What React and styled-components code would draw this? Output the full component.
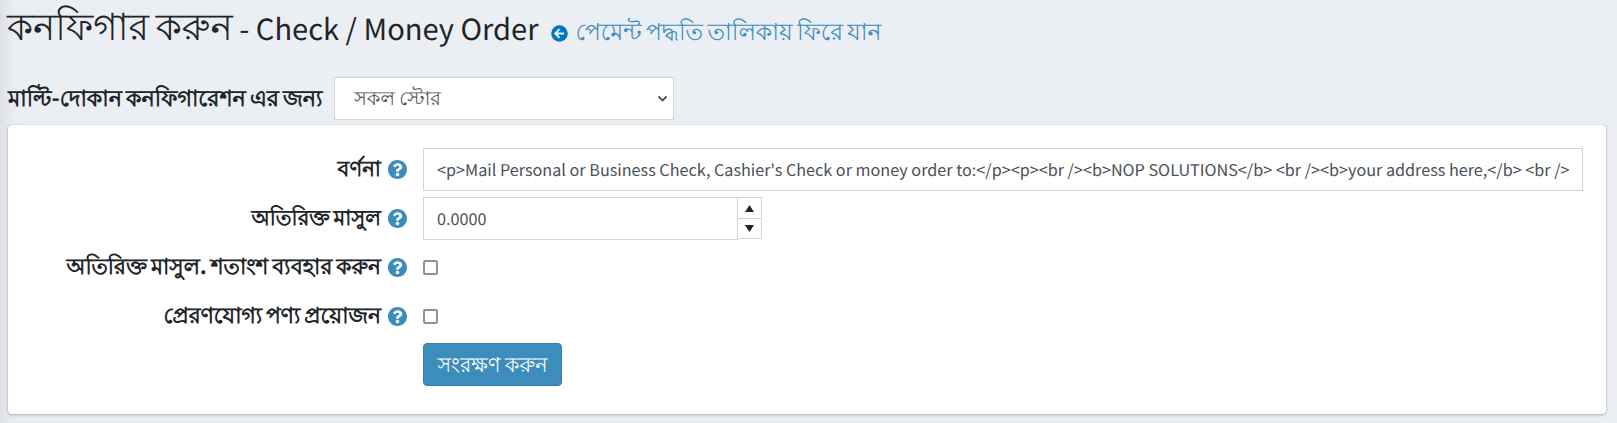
import React from "react";
import styled, { createGlobalStyle } from "styled-components";

const GlobalStyle = createGlobalStyle`
  * { box-sizing: border-box; }
  body {
    margin: 0;
    background: #ebeef3;
    color: #212529;
    font-family: "Noto Sans CJK JP", "Noto Sans", sans-serif;
    text-rendering: geometricPrecision;
  }
`;

const Page = styled.main`
  height: 423px;
  padding: 0 11px 0 7px;
  background: linear-gradient(to right, #dde0e5 0, #e6e9ee 8px, #ebeef3 22px);
`;

const Header = styled.header`
  display: flex;
  align-items: baseline;
  height: 77px;
  white-space: nowrap;
`;

const Title = styled.h1`
  margin: 0;
  font-weight: 400;
  font-size: 29.1px;
  line-height: 56px;
`;

const TitleLocal = styled.span`
  font-family: "Noto Sans", sans-serif;
  font-size: 37.3px;
  line-height: 40px;
  word-spacing: -3px;
`;

const BackLink = styled.a`
  display: flex;
  align-items: baseline;
  margin-left: 13px;
  color: #3c8dbc;
  font-size: 23.4px;
  line-height: 40px;
  word-spacing: -1px;
  svg { margin-right: 7px; transform: translateY(2px); }
`;

const StoreScope = styled.div`
  display: flex;
  align-items: center;
  height: 43px;
`;

const Label = styled.label`
  font-weight: 700;
  font-size: ${(p) => p.$size || 21.6}px;
  line-height: 32px;
  padding-bottom: 3px;
  word-spacing: -1px;
  white-space: nowrap;
`;

const StoreLabel = styled(Label)`
  width: 327px;
  padding-left: 1px;
`;

const Control = styled.div`
  display: flex;
  align-items: center;
  width: ${(p) => p.$width};
  height: 43px;
  padding: 0 13px 1px;
  border: 1px solid #ced4da;
  background: #fff;
  color: #495057;
  font-size: 16.2px;
  line-height: 24px;
  white-space: nowrap;
`;

const Select = styled(Control)`
  justify-content: space-between;
  padding: 0 5px 3px 19px;
  font-size: 19.4px;
  svg { transform: translateY(2px); }
`;

const Value = styled.span`
  flex: 1;
  overflow: hidden;
`;

const Card = styled.section`
  margin: 5px 0 0 1px;
  height: 289px;
  padding: 23px 23px 0 0;
  border-radius: 4px;
  background: #fff;
  box-shadow: 0 0 1px rgba(0, 0, 0, 0.25), 0 1px 3px rgba(0, 0, 0, 0.25);
`;

const Row = styled.div`
  display: grid;
  grid-template-columns: 399px minmax(0, 1fr);
  column-gap: 16px;
  align-items: center;
  height: 43px;
  margin-bottom: ${(p) => p.$gap || 6}px;
`;

const LabelCell = styled.div`
  display: flex;
  align-items: center;
  justify-content: flex-end;
  gap: 7px;
`;

const NumberField = styled.div`
  display: flex;
`;

const Spinner = styled.div`
  display: grid;
  grid-template-rows: 22px 20px;
  width: 25px;
  height: 42px;
  margin-left: -1px;
`;

const SpinButton = styled.button`
  display: grid;
  place-items: center;
  padding: 0;
  margin-top: ${(p) => (p.$lower ? "-1px" : "0")};
  border: 1px solid #ced4da;
  background: #fff;
`;

const Checkbox = styled.input`
  appearance: none;
  display: block;
  width: 15px;
  height: 15px;
  margin: 0;
  border: 2px solid #8f8f9d;
  border-radius: 2px;
  background: #fff;
`;

const SaveButton = styled.button`
  grid-column: 2;
  justify-self: start;
  display: flex;
  align-items: center;
  justify-content: center;
  width: 139px;
  height: 43px;
  padding: 0 0 4px;
  border: 1px solid #367fa9;
  border-radius: 4px;
  background: #3c8dbc;
  color: #fff;
  font: 400 20.6px/24px "Noto Sans CJK JP", "Noto Sans", sans-serif;
  text-rendering: inherit;
  white-space: nowrap;
`;

const HelpIcon = () => (
  <svg width="19" height="19" viewBox="8 8 496 496">
    <path fill="#3c8dbc" d="M504 256c0 137-111 248-248 248S8 393 8 256C8 119.100 119 8 256 8s248 111.100 248 248zM262.700 90c-54.500 0-89.300 23-116.500 63.800-3.500 5.300-2.400 12.400 2.700 16.300l34.700 26.300c5.200 3.900 12.600 3 16.700-2.100 17.900-22.700 30.100-35.800 57.300-35.800 20.400 0 45.700 13.100 45.700 33 0 15-12.400 22.700-32.500 34C247.100 238.500 216 254.900 216 296v4c0 6.600 5.400 12 12 12h56c6.600 0 12-5.400 12-12v-1.300c0-28.500 83.200-29.600 83.200-106.700 0-58-60.200-102-116.500-102zM256 338c-25.400 0-46 20.600-46 46s20.600 46 46 46 46-20.600 46-46-20.600-46-46-46z" />
  </svg>
);

const BackIcon = () => (
  <svg width="17" height="17" viewBox="0 0 17 17">
    <circle cx="8.500" cy="8.500" r="8.300" fill="#0077c2" />
    <path d="M13 8.500H4.500M8.500 4.200L4.200 8.500l4.300 4.300" fill="none" stroke="#ebeef3" strokeWidth="1.900" />
  </svg>
);

const Field = ({ label, size, gap, children }) => (
  <Row $gap={gap}>
    <LabelCell>
      <Label $size={size}>{label}</Label>
      <HelpIcon />
    </LabelCell>
    {children}
  </Row>
);

const description =
  "<p>Mail Personal or Business Check, Cashier's Check or money order to:</p><p><br /><b>NOP SOLUTIONS</b> <br /><b>your address here,</b> <br />";

export default function App() {
  return (
    <>
      <GlobalStyle />
      <Page>
        <Header>
          <Title>
            <TitleLocal>কনফিগার করুন</TitleLocal> - Check / Money Order
          </Title>
          <BackLink>
            <BackIcon />
            পেমেন্ট পদ্ধতি তালিকায় ফিরে যান
          </BackLink>
        </Header>
        <StoreScope>
          <StoreLabel $size={22.2}>মাল্টি-দোকান কনফিগারেশন এর জন্য</StoreLabel>
          <Select $width="340px">
            সকল স্টোর
            <svg width="11" height="8" viewBox="0 0 11 8">
              <path d="M1.500 1.500l4 4 4-4" fill="none" stroke="#495057" strokeWidth="1.800" />
            </svg>
          </Select>
        </StoreScope>
        <Card>
          <Field label="বর্ণনা" size={21.2}>
            <Control $width="100%">
              <Value>{description}</Value>
            </Control>
          </Field>
          <Field label="অতিরিক্ত মাসুল" size={21.1}>
            <NumberField>
              <Control $width="315px">0.0000</Control>
              <Spinner>
                <SpinButton>
                  <svg width="9" height="7"><path d="M0 7L4.500 0 9 7z" fill="#222" /></svg>
                </SpinButton>
                <SpinButton $lower>
                  <svg width="9" height="7"><path d="M0 0h9L4.500 7z" fill="#222" /></svg>
                </SpinButton>
              </Spinner>
            </NumberField>
          </Field>
          <Field label="অতিরিক্ত মাসুল. শতাংশ ব্যবহার করুন" size={21.7}>
            <Checkbox type="checkbox" />
          </Field>
          <Field label="প্রেরণযোগ্য পণ্য প্রয়োজন" size={21.8} gap={5}>
            <Checkbox type="checkbox" />
          </Field>
          <Row>
            <SaveButton>সংরক্ষণ করুন</SaveButton>
          </Row>
        </Card>
      </Page>
    </>
  );
}
